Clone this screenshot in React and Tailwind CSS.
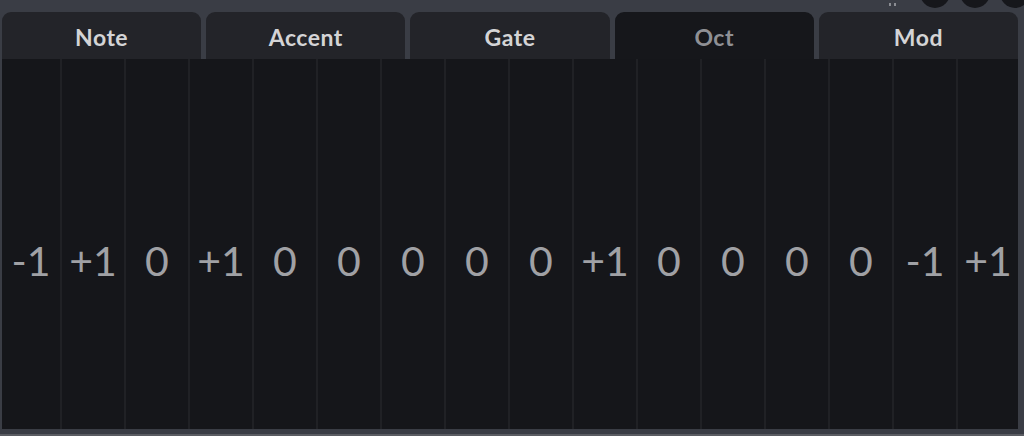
const tabs = ['Note', 'Accent', 'Gate', 'Oct', 'Mod'];
const steps = ['-1', '+1', '0', '+1', '0', '0', '0', '0', '0', '+1', '0', '0', '0', '0', '-1', '+1'];

export default function App() {
  const active = 'Oct';
  return (
    <div className="relative h-[436px] w-[1024px] overflow-hidden bg-[#3a3d45]" style={{ fontFamily: 'Lato, "Open Sans", sans-serif' }}>
      {/* window controls peeking from above */}
      <div className="absolute right-[-6px] top-[-22px] flex items-center gap-[10px]">
        <div className="mr-[14px] mt-[22px] flex gap-[3px]">
          <div className="h-[3px] w-[2px] bg-[#8a8c92]" />
          <div className="h-[3px] w-[2px] bg-[#8a8c92]" />
        </div>
        <div className="h-[30px] w-[30px] rounded-full bg-[#16171b]" />
        <div className="h-[30px] w-[30px] rounded-full bg-[#16171b]" />
        <div className="h-[30px] w-[30px] rounded-full bg-[#16171b]" />
      </div>

      <div className="flex flex-col pt-[12px] pl-[2px] pr-[6px]">
        <div className="flex h-[47px] gap-[5px]">
          {tabs.map((t) => (
            <div
              key={t}
              className={
                'flex flex-1 items-center justify-center rounded-t-[9px] pt-[4px] text-[23px] font-bold tracking-[0.5px] ' +
                (t === active ? 'bg-[#16171b] text-[#8f9095]' : 'bg-[#232429] text-[#d4d4d6]')
              }
            >
              {t}
            </div>
          ))}
        </div>
        <div className="grid h-[370px] grid-cols-[60px_repeat(14,64px)_1fr] bg-[#15161a]">
          {steps.map((s, i) => (
            <div
              key={i}
              className={
                'flex items-center justify-center text-[41px] font-normal text-[#a0a1a5] ' +
                (i < 15 ? 'border-r-[2px] border-[#202125]' : '')
              }
            >
              <span className="mt-[34px]">{s}</span>
            </div>
          ))}
        </div>
        <div className="h-[5px]" />
      </div>
      <div className="absolute bottom-0 left-0 h-[2px] w-full bg-[#5a5c62]" />
    </div>
  );
}
